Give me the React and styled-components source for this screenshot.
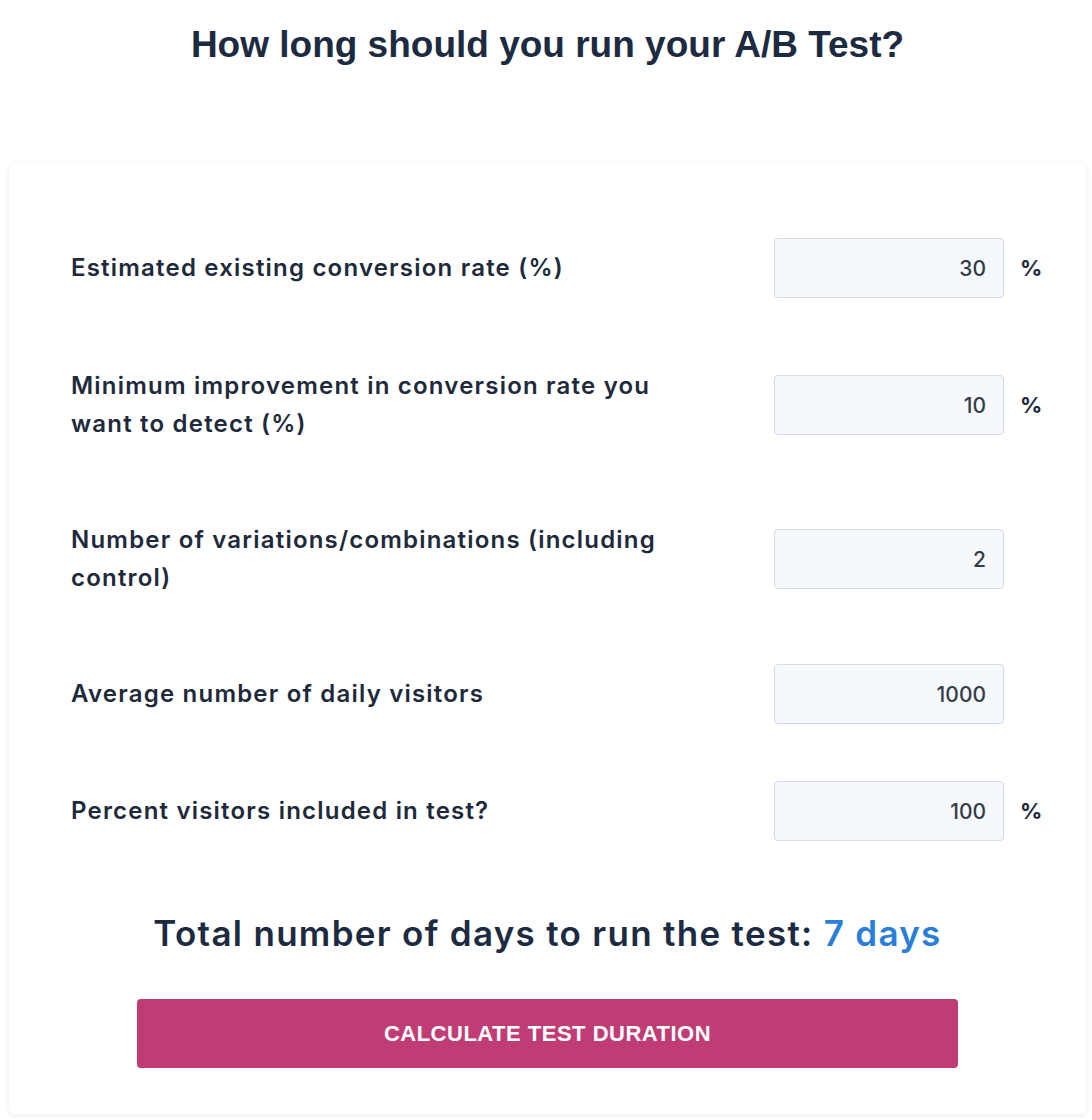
import React, { useState } from 'react';
import styled, { createGlobalStyle } from 'styled-components';

const GlobalStyle = createGlobalStyle`
  body {
    margin: 0;
    background: #ffffff;
    font-family: "Liberation Sans", Arial, sans-serif;
  }
`;

const Page = styled.div`
  padding: 0 6px 6px 9px;
`;

const Title = styled.h1`
  margin: 0;
  padding: 25px 0 98px;
  text-align: center;
  font-family: "Liberation Sans", Arial, sans-serif;
  font-size: 37px;
  line-height: 40px;
  font-weight: 700;
  color: #1d2b42;
`;

const Card = styled.div`
  background: #ffffff;
  border-radius: 6px;
  box-shadow: 0 1px 6px rgba(30, 50, 80, 0.1);
  padding: 75px 0 46px;
`;

const FieldList = styled.div`
  padding: 0 30px 0 62px;
`;

const Row = styled.div`
  display: flex;
  align-items: center;
  margin-top: ${props => props.space || 0}px;
`;

const Label = styled.label`
  flex: 1;
  padding-right: 90px;
  font-family: Inter, "Noto Sans", sans-serif;
  font-size: 24px;
  line-height: 38px;
  font-weight: 600;
  letter-spacing: 1.2px;
  color: #1e2a3b;
`;

const Input = styled.input`
  box-sizing: border-box;
  width: 230px;
  height: 60px;
  padding: 0 17px;
  border: 1px solid #d6dbe2;
  border-radius: 4px;
  background: #f5f8fc;
  text-align: right;
  font-family: Inter, "Noto Sans", sans-serif;
  font-size: 21px;
  font-weight: 500;
  color: #363c47;
  outline: none;
`;

const Unit = styled.span`
  width: 36px;
  margin-left: 16px;
  font-family: Inter, "Noto Sans", sans-serif;
  font-size: 22px;
  font-weight: 700;
  color: #1e2a3b;
`;

const Result = styled.div`
  margin-top: 70px;
  text-align: center;
  font-family: Inter, "Noto Sans", sans-serif;
  font-size: 35px;
  line-height: 44px;
  font-weight: 600;
  letter-spacing: 1.3px;
  color: #1d2b42;
`;

const Days = styled.span`
  color: #2a7ed8;
`;

const Button = styled.button`
  display: block;
  width: 821px;
  height: 69px;
  margin: 44px auto 0;
  border: none;
  border-radius: 4px;
  background: #bf3d74;
  color: #ffffff;
  font-family: "Liberation Sans", Arial, sans-serif;
  font-size: 22px;
  font-weight: 700;
  letter-spacing: 0.5px;
  text-transform: uppercase;
  cursor: pointer;
`;

const fields = [
  { id: 'rate', label: 'Estimated existing conversion rate (%)', value: '30', unit: '%', space: 0 },
  { id: 'improve', label: 'Minimum improvement in conversion rate you want to detect (%)', value: '10', unit: '%', space: 69 },
  { id: 'variations', label: 'Number of variations/combinations (including control)', value: '2', unit: '', space: 78 },
  { id: 'visitors', label: 'Average number of daily visitors', value: '1000', unit: '', space: 67 },
  { id: 'percent', label: 'Percent visitors included in test?', value: '100', unit: '%', space: 57 },
];

const App = () => {
  const [values, setValues] = useState(
    Object.fromEntries(fields.map(f => [f.id, f.value]))
  );

  return (
    <>
      <GlobalStyle />
      <Page>
        <Title>How long should you run your A/B Test?</Title>
        <Card>
          <FieldList>
            {fields.map(f => (
              <Row key={f.id} space={f.space}>
                <Label htmlFor={f.id}>{f.label}</Label>
                <Input
                  id={f.id}
                  value={values[f.id]}
                  onChange={e => setValues({ ...values, [f.id]: e.target.value })}
                />
                <Unit>{f.unit}</Unit>
              </Row>
            ))}
          </FieldList>
          <Result>
            Total number of days to run the test: <Days>7 days</Days>
          </Result>
          <Button>Calculate Test Duration</Button>
        </Card>
      </Page>
    </>
  );
};

export default App;
